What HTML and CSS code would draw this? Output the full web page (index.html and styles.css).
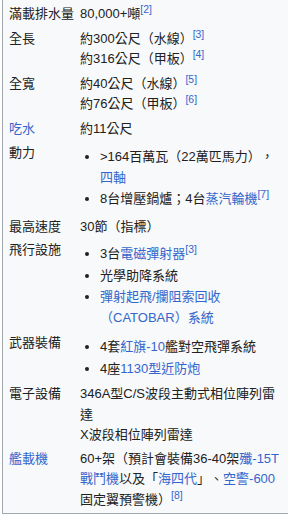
FILE: index.html
```html
<!DOCTYPE html>
<html lang="zh-Hant">
<head>
<meta charset="utf-8">
<link rel="stylesheet" href="styles.css">
</head>
<body>
<div class="infobox">
  <div class="row">
    <div class="label">滿載排水量</div>
    <div class="value">80,000+噸<sup class="ref">[2]</sup></div>
  </div>
  <div class="row">
    <div class="label">全長</div>
    <div class="value">約300公尺（水線）<sup class="ref">[3]</sup><br>約316公尺（甲板）<sup class="ref">[4]</sup></div>
  </div>
  <div class="row">
    <div class="label">全寬</div>
    <div class="value">約40公尺（水線）<sup class="ref">[5]</sup><br>約76公尺（甲板）<sup class="ref">[6]</sup></div>
  </div>
  <div class="row">
    <div class="label"><a class="link">吃水</a></div>
    <div class="value">約11公尺</div>
  </div>
  <div class="row">
    <div class="label">動力</div>
    <div class="value">
      <ul class="list">
        <li>&gt;164百萬瓦（22萬匹馬力），<a class="link">四軸</a></li>
        <li>8台增壓鍋爐；4台<a class="link">蒸汽輪機</a><sup class="ref">[7]</sup></li>
      </ul>
    </div>
  </div>
  <div class="row">
    <div class="label">最高速度</div>
    <div class="value">30節（指標）</div>
  </div>
  <div class="row">
    <div class="label">飛行設施</div>
    <div class="value">
      <ul class="list">
        <li>3台<a class="link">電磁彈射器</a><sup class="ref">[3]</sup></li>
        <li>光學助降系統</li>
        <li><a class="link">彈射起飛/攔阻索回收</a><a class="link">（CATOBAR）系統</a></li>
      </ul>
    </div>
  </div>
  <div class="row">
    <div class="label">武器裝備</div>
    <div class="value">
      <ul class="list">
        <li>4套<a class="link">紅旗-10</a>艦對空飛彈系統</li>
        <li>4座<a class="link">1130型近防炮</a></li>
      </ul>
    </div>
  </div>
  <div class="row">
    <div class="label">電子設備</div>
    <div class="value">346A型C/S波段主動式相位陣列雷達<br>X波段相位陣列雷達</div>
  </div>
  <div class="row">
    <div class="label"><a class="link">艦載機</a></div>
    <div class="value">60+架（預計會裝備36-40架<a class="link">殲-15T</a><a class="link">戰鬥機</a>以及「<a class="link">海四代</a>」、<a class="link">空警-600</a>固定翼預警機）<sup class="ref">[8]</sup></div>
  </div>
</div>
</body>
</html>
```

FILE: styles.css
```css
html, body {
  margin: 0;
  padding: 0;
  background: #ffffff;
  overflow: hidden;
}

body {
  width: 288px;
  height: 514px;
  font-family: "Liberation Sans", "Noto Sans CJK TC", sans-serif;
  font-size: 13px;
  line-height: 20.5px;
  color: #202122;
  text-spacing-trim: space-all;
}

.infobox {
  margin-left: 2px;
  width: 285px;
  padding-top: 2px;
  background: #f8f9fa;
  border-left: 1px solid #a2a9b1;
  border-bottom: 1px solid #a2a9b1;
  display: flex;
  flex-direction: column;
}

.row {
  display: grid;
  grid-template-columns: 74px 209px;
}

.label {
  padding: 2px 3px 2px 6px;
  white-space: nowrap;
}

.value {
  padding: 2px 3px;
}

.link {
  color: #3366cc;
  text-decoration: none;
}

.ref {
  color: #3366cc;
  font-size: 80%;
  line-height: 1;
  vertical-align: super;
}

.list {
  margin: 4px 0 0 20px;
  padding: 0;
  list-style: disc;
}

.list li {
  margin-bottom: 1px;
}

.row:nth-child(6) .label,
.row:nth-child(6) .value {
  padding-top: 4px;
  padding-bottom: 1px;
}

.row:last-child .value,
.row:last-child .label {
  padding-top: 1px;
  padding-bottom: 3px;
}
```
